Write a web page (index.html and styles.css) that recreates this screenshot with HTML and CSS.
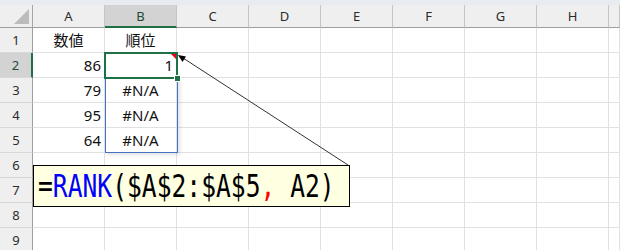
FILE: index.html
```html
<!DOCTYPE html>
<html lang="ja">
<head>
    <meta charset="UTF-8">
    <meta name="viewport" content="width=device-width, initial-scale=1.0">
    <title>RANK</title>
    <link rel="stylesheet" href="styles.css">
</head>
<body>

    <div class="sheet-wrap">
        <div class="sheet">
            <!-- column headers -->
            <div class="corner"></div>
            <div class="col-head">A</div>
            <div class="col-head selected">B</div>
            <div class="col-head">C</div>
            <div class="col-head">D</div>
            <div class="col-head">E</div>
            <div class="col-head">F</div>
            <div class="col-head">G</div>
            <div class="col-head">H</div>
            <div class="col-head"></div>

            <!-- row 1 -->
            <div class="row-head">1</div>
            <div class="cell center">数値</div>
            <div class="cell center">順位</div>
            <div class="cell"></div><div class="cell"></div><div class="cell"></div><div class="cell"></div><div class="cell"></div><div class="cell"></div><div class="cell"></div>

            <!-- row 2 -->
            <div class="row-head selected">2</div>
            <div class="cell num">86</div>
            <div class="cell num">1</div>
            <div class="cell"></div><div class="cell"></div><div class="cell"></div><div class="cell"></div><div class="cell"></div><div class="cell"></div><div class="cell"></div>

            <!-- row 3 -->
            <div class="row-head">3</div>
            <div class="cell num">79</div>
            <div class="cell center">#N/A</div>
            <div class="cell"></div><div class="cell"></div><div class="cell"></div><div class="cell"></div><div class="cell"></div><div class="cell"></div><div class="cell"></div>

            <!-- row 4 -->
            <div class="row-head">4</div>
            <div class="cell num">95</div>
            <div class="cell center">#N/A</div>
            <div class="cell"></div><div class="cell"></div><div class="cell"></div><div class="cell"></div><div class="cell"></div><div class="cell"></div><div class="cell"></div>

            <!-- row 5 -->
            <div class="row-head">5</div>
            <div class="cell num">64</div>
            <div class="cell center">#N/A</div>
            <div class="cell"></div><div class="cell"></div><div class="cell"></div><div class="cell"></div><div class="cell"></div><div class="cell"></div><div class="cell"></div>

            <!-- rows 6 - 9 -->
            <div class="row-head">6</div>
            <div class="cell"></div><div class="cell"></div><div class="cell"></div><div class="cell"></div><div class="cell"></div><div class="cell"></div><div class="cell"></div><div class="cell"></div><div class="cell"></div>
            <div class="row-head">7</div>
            <div class="cell"></div><div class="cell"></div><div class="cell"></div><div class="cell"></div><div class="cell"></div><div class="cell"></div><div class="cell"></div><div class="cell"></div><div class="cell"></div>
            <div class="row-head">8</div>
            <div class="cell"></div><div class="cell"></div><div class="cell"></div><div class="cell"></div><div class="cell"></div><div class="cell"></div><div class="cell"></div><div class="cell"></div><div class="cell"></div>
            <div class="row-head">9</div>
            <div class="cell"></div><div class="cell"></div><div class="cell"></div><div class="cell"></div><div class="cell"></div><div class="cell"></div><div class="cell"></div><div class="cell"></div><div class="cell"></div>
        </div>

        <!-- selection overlays, same grid laid over the sheet -->
        <div class="sheet marks">
            <div class="ref-range"></div>
            <div class="active-cell"></div>
        </div>
    </div>

    <!-- formula callout -->
    <div class="callout">
        <span class="formula"><span class="fn">=</span><span class="fn-name">RANK</span>($A$2:$A$5<span class="sep">,</span> A2)</span>
    </div>

    <svg class="leader" width="620" height="250" viewBox="0 0 620 250">
        <line x1="348" y1="165" x2="183" y2="58" stroke="#333" stroke-width="1"/>
        <polygon points="178,55 186,56.5 182.5,62" fill="#000"/>
    </svg>

</body>
</html>
```

FILE: styles.css
```css
body {
    margin: 0;
    padding-top: 5px;
    background-color: #e8ebef;
    font-family: "Noto Sans", "Noto Sans CJK JP", sans-serif;
    overflow: hidden;
}
.sheet-wrap {
    position: relative;
}
.sheet {
    display: grid;
    grid-template-columns: 33px repeat(8, 72px) 1fr;
    grid-template-rows: 23px repeat(9, 25px);
    background-color: #fff;
    height: 245px;
}
.sheet > div {
    box-sizing: border-box;
}
.marks {
    position: absolute;
    inset: 0;
    background: none;
    pointer-events: none;
}

/* headers */
.corner,
.col-head,
.row-head {
    background-color: #efefef;
    color: #2b2b2b;
    font-size: 13px;
    display: flex;
    align-items: center;
    justify-content: center;
}
.corner {
    position: relative;
    border-right: 1px solid #a6a6a6;
    border-bottom: 1px solid #9e9e9e;
}
.corner::after {
    content: "";
    position: absolute;
    right: 3px;
    bottom: 3px;
    border-style: solid;
    border-width: 0 0 15px 15px;
    border-color: transparent transparent #bcbcbc transparent;
}
.col-head {
    border-right: 1px solid #c4c4c4;
    border-bottom: 1px solid #9e9e9e;
}
.row-head {
    border-right: 1px solid #9e9e9e;
    border-bottom: 1px solid #d8d8d8;
}
.col-head.selected {
    background-color: #d3d3d3;
    color: #1d4d33;
    border-bottom: 2px solid #1e7145;
}
.row-head.selected {
    background-color: #d3d3d3;
    color: #1d4d33;
    border-right: 2px solid #1e7145;
}

/* cells */
.cell {
    border-right: 1px solid #e1e1e1;
    border-bottom: 1px solid #e1e1e1;
    font-size: 15px;
    color: #111;
    display: flex;
    align-items: center;
    padding: 0 3px 1px;
}
.cell.num {
    justify-content: flex-end;
}
.cell.center {
    justify-content: center;
}

/* selection */
.active-cell {
    grid-column: 3;
    grid-row: 3;
    margin: -1px;
    border: 2px solid #1e7145;
    position: relative;
}
.active-cell::before {
    content: "";
    position: absolute;
    top: 0;
    right: 0;
    border-style: solid;
    border-width: 0 5px 5px 0;
    border-color: transparent #e8001c transparent transparent;
}
.active-cell::after {
    content: "";
    position: absolute;
    right: -5px;
    bottom: -5px;
    width: 5px;
    height: 5px;
    background-color: #1e7145;
    border: 1px solid #fff;
}
.ref-range {
    grid-column: 3;
    grid-row: 4 / 7;
    margin-right: -1px;
    border: 1px solid #4472c4;
    box-shadow: 2px 2px 4px rgba(0, 0, 0, 0.12);
}

/* callout */
.callout {
    position: absolute;
    left: 33px;
    top: 165px;
    width: 317px;
    height: 42px;
    box-sizing: border-box;
    border: 1px solid #000;
    background-color: #ffffe1;
    display: flex;
    align-items: center;
    padding-left: 4px;
    z-index: 3;
}
.formula {
    display: inline-block;
    font-family: "DejaVu Sans Mono", monospace;
    font-size: 32px;
    line-height: 1;
    color: #000;
    white-space: pre;
    transform: scaleX(0.77);
    transform-origin: left center;
}
.formula .fn-name {
    color: #0000ff;
}
.formula .sep {
    color: #ff0000;
}

.leader {
    position: absolute;
    left: 0;
    top: 0;
    pointer-events: none;
    z-index: 4;
}
```
